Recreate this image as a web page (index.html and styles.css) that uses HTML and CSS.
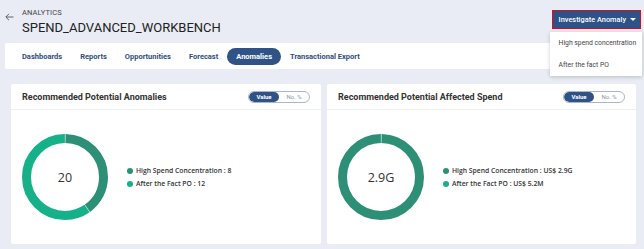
FILE: index.html
```html
<!DOCTYPE html>
<html lang="en">
<head>
    <meta charset="UTF-8">
    <meta name="viewport" content="width=device-width, initial-scale=1.0">
    <title>Spend Advanced Workbench - Anomalies</title>
    <link rel="stylesheet" href="styles.css">
</head>
<body>
    <div class="page-header">
        <a class="back" href="#">
            <svg width="9" height="8" viewBox="0 0 9 8"><path d="M8.5 4H1M4 0.8L0.8 4L4 7.2" fill="none" stroke="#555" stroke-width="0.9"/></svg>
        </a>
        <div class="titles">
            <div class="crumb">ANALYTICS</div>
            <h1>SPEND_ADVANCED_WORKBENCH</h1>
        </div>
        <div class="actions">
            <button class="investigate">Investigate Anomaly <span class="caret"></span></button>
            <div class="menu">
                <div class="menu-item">High spend concentration</div>
                <div class="menu-item">After the fact PO</div>
            </div>
        </div>
    </div>

    <nav class="tabs">
        <a class="tab" href="#">Dashboards</a>
        <a class="tab" href="#">Reports</a>
        <a class="tab" href="#">Opportunities</a>
        <a class="tab" href="#">Forecast</a>
        <a class="tab active" href="#">Anomalies</a>
        <a class="tab" href="#">Transactional Export</a>
    </nav>

    <div class="cards">
        <div class="card">
            <div class="card-head">
                <h2>Recommended Potential Anomalies</h2>
                <div class="toggle"><span class="on">Value</span><span>No. %</span></div>
            </div>
            <div class="card-body">
                <div class="donut">
                    <svg width="86" height="86" viewBox="0 0 86 86">
                        <!-- 8 of 20 / 12 of 20, r=38.5 -> circumference 241.9 -->
                        <circle cx="43" cy="43" r="38.5" fill="none" stroke="#16b089" stroke-width="9"
                                stroke-dasharray="144.1 97.8" stroke-dashoffset="-97.3" transform="rotate(-90 43 43)"/>
                        <circle cx="43" cy="43" r="38.5" fill="none" stroke="#2e8f77" stroke-width="9"
                                stroke-dasharray="96.3 145.6" stroke-dashoffset="-0.5" transform="rotate(-90 43 43)"/>
                    </svg>
                    <span class="donut-label">20</span>
                </div>
                <ul class="legend">
                    <li><i class="dot dark"></i>High Spend Concentration : 8</li>
                    <li><i class="dot light"></i>After the Fact PO : 12</li>
                </ul>
            </div>
        </div>

        <div class="card">
            <div class="card-head">
                <h2>Recommended Potential Affected Spend</h2>
                <div class="toggle"><span class="on">Value</span><span>No. %</span></div>
            </div>
            <div class="card-body">
                <div class="donut">
                    <svg width="86" height="86" viewBox="0 0 86 86">
                        <circle cx="43" cy="43" r="38.5" fill="none" stroke="#2e8f77" stroke-width="9"
                                stroke-dasharray="240.9 1" stroke-dashoffset="-0.5" transform="rotate(-90 43 43)"/>
                    </svg>
                    <span class="donut-label">2.9G</span>
                </div>
                <ul class="legend">
                    <li><i class="dot dark"></i>High Spend Concentration : US$ 2.9G</li>
                    <li><i class="dot light"></i>After the Fact PO : US$ 5.2M</li>
                </ul>
            </div>
        </div>
    </div>
</body>
</html>
```

FILE: styles.css
```css
body {
    margin: 0;
    background-color: #e9ecf4;
    font-family: Roboto, "Liberation Sans", sans-serif;
    color: #222;
}
.page-header {
    display: flex;
    align-items: flex-start;
    height: 43px;
    padding-left: 5px;
}
.back {
    margin-top: 13px;
    width: 17px;
    line-height: 0;
}
.titles {
    padding-top: 8px;
}
.crumb {
    font-size: 7.5px;
    color: #444;
    letter-spacing: 0.1px;
}
h1 {
    margin: 3px 0 0;
    font-size: 13px;
    font-weight: 400;
    color: #222;
}
.actions {
    margin-left: auto;
    margin-right: 3px;
    margin-top: 10px;
    position: relative;
}
.investigate {
    display: flex;
    align-items: center;
    height: 19px;
    padding: 0 4px 0 6px;
    background-color: #2c5287;
    border: 1.5px solid #d5101d;
    color: white;
    font-family: Roboto, sans-serif;
    font-size: 7.4px;
    font-weight: 500;
    cursor: pointer;
}
.caret {
    margin-left: 4px;
    border-left: 3px solid transparent;
    border-right: 3px solid transparent;
    border-top: 3.5px solid white;
}
.menu {
    position: absolute;
    top: 22px;
    left: -2px;
    right: -1px;
    background-color: white;
    box-shadow: 0 1px 4px rgba(0, 0, 0, 0.2);
    z-index: 2;
}
.menu-item {
    padding: 0 9px;
    height: 22px;
    line-height: 22px;
    white-space: nowrap;
    font-size: 6.8px;
    color: #444;
}
.tabs {
    display: flex;
    align-items: center;
    height: 26px;
    margin: 0 5px;
    padding-left: 8px;
    background-color: white;
    border-radius: 2px;
}
.tab {
    padding: 0 9px;
    height: 17px;
    line-height: 17px;
    border-radius: 9px;
    font-size: 7.5px;
    font-weight: 700;
    color: #2f4d7e;
    text-decoration: none;
}
.tab.active {
    background-color: #2f5387;
    color: white;
}
.cards {
    display: grid;
    grid-template-columns: 310px 309px;
    gap: 6px;
    padding: 15px 0 0 11px;
}
.card {
    background-color: white;
    border-radius: 2px;
    height: 160px;
}
.card-head {
    display: flex;
    align-items: center;
    justify-content: space-between;
    height: 25px;
    padding: 0 11px;
    border-bottom: 1px solid #eceef2;
}
h2 {
    margin: 0;
    font-size: 9px;
    font-weight: 700;
    color: #333;
}
.toggle {
    display: flex;
    height: 10px;
    border: 1px solid #a9b6cc;
    border-radius: 6px;
    overflow: hidden;
    font-size: 6px;
    line-height: 10px;
    color: #8a94a6;
}
.toggle span {
    width: 30px;
    text-align: center;
}
.toggle .on {
    background-color: #2f5387;
    color: white;
    border-radius: 6px;
    font-weight: 700;
}
.card-body {
    display: flex;
    align-items: center;
    height: 134px;
    padding-left: 11px;
}
.donut {
    position: relative;
    width: 86px;
    height: 86px;
}
.donut svg {
    display: block;
}
.donut-label {
    position: absolute;
    inset: 0;
    display: flex;
    align-items: center;
    justify-content: center;
    font-family: "Open Sans", sans-serif;
    font-size: 12.5px;
    color: #333;
}
.legend {
    list-style: none;
    margin: 0 0 0 19px;
    padding: 0;
    font-family: "Open Sans", sans-serif;
    font-size: 6.8px;
    font-weight: 600;
    color: #333;
}
.legend li {
    display: flex;
    align-items: center;
    height: 13px;
}
.dot {
    width: 6px;
    height: 6px;
    border-radius: 50%;
    margin-right: 3px;
}
.dot.dark {
    background-color: #2e8f77;
}
.dot.light {
    background-color: #16b089;
}
```
